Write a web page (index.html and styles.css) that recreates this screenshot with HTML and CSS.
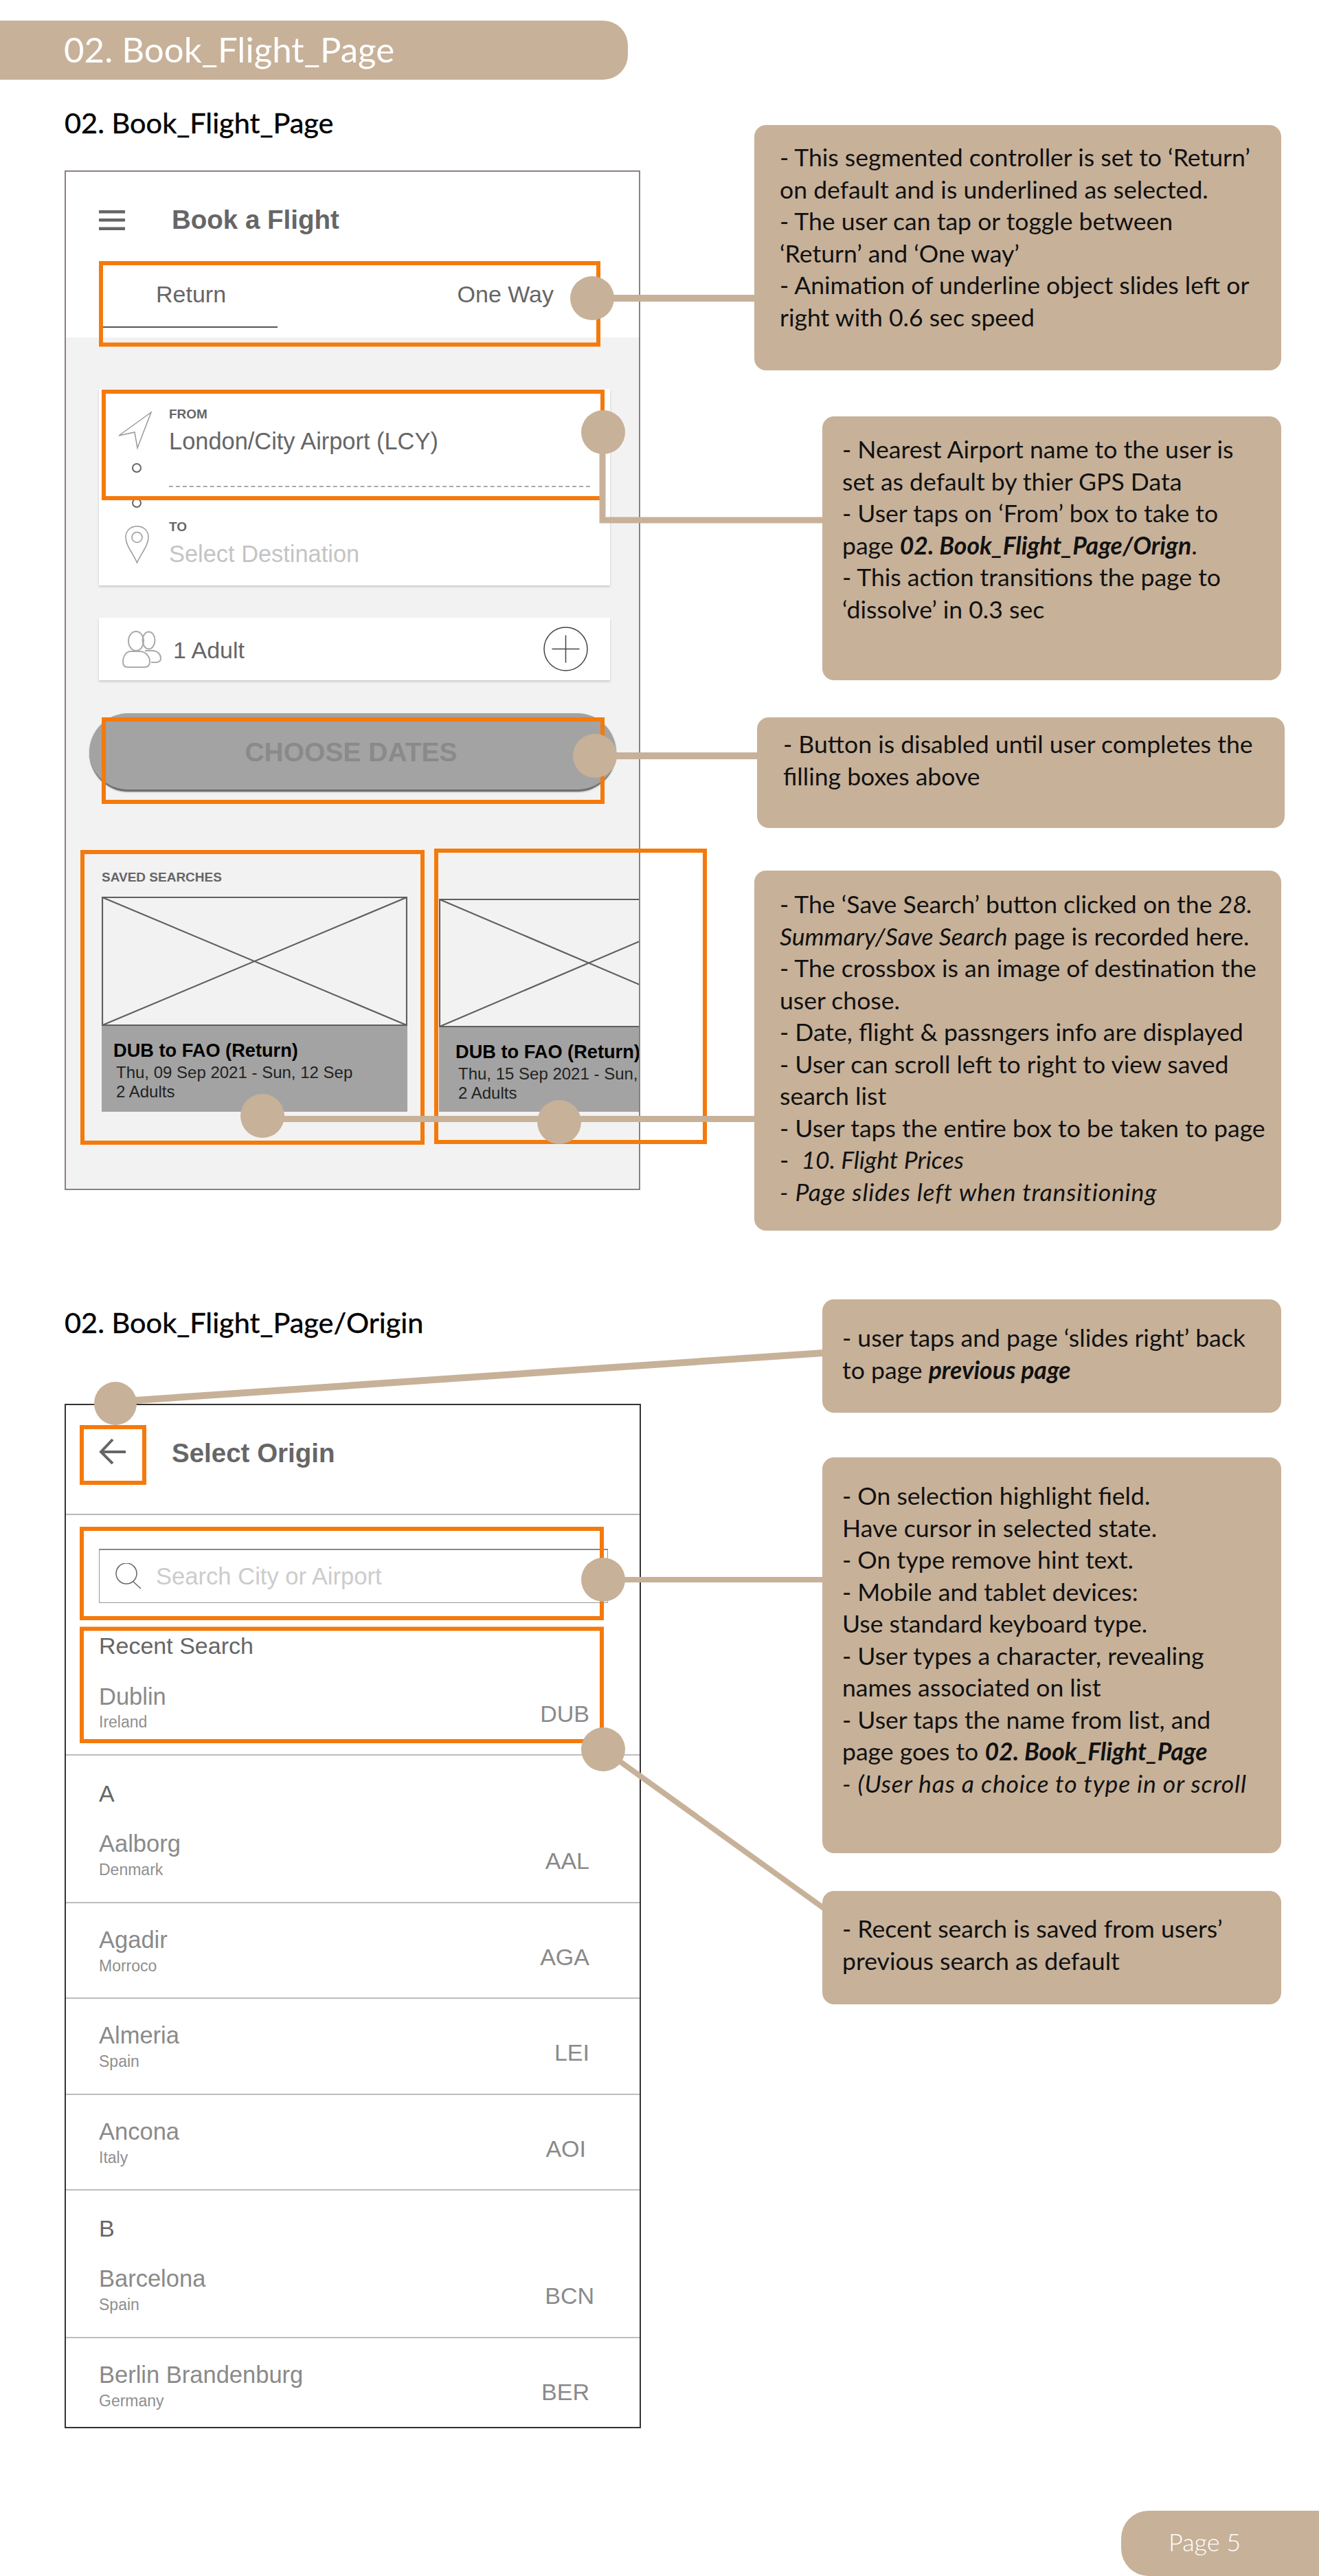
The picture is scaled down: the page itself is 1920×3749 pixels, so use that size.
FILE: index.html
```html
<!DOCTYPE html>
<html lang="en">
<head>
    <meta charset="UTF-8">
    <title>02. Book_Flight_Page</title>
    <link rel="stylesheet" href="styles.css">
</head>
<body>
<div class="page">
    <div class="banner">02. Book_Flight_Page</div>

    <section class="board board-book">
        <div class="board-left">
            <h2 class="board-title">02. Book_Flight_Page</h2>
            <div class="phone phone-book">
                <div class="topbar">
                    <svg class="burger" width="38" height="29" viewBox="0 0 38 29">
                        <rect width="38" height="4.5" y="0"/>
                        <rect width="38" height="4.5" y="12"/>
                        <rect width="38" height="4.5" y="24.5"/>
                    </svg>
                    <span class="screen-name">Book a Flight</span>
                </div>
                <div class="tabs">
                    <div class="tab tab-on">Return</div>
                    <div class="tab">One Way</div>
                </div>
                <div class="book-body">
                    <div class="card place-card">
                        <div class="place place-from">
                            <svg class="place-icon" width="102" height="143" viewBox="0 0 102 143">
                                <path class="line-light" d="M76 34 L29 68 L52 63 L56 86 Z"/>
                                <circle class="line-dark" cx="55" cy="115" r="6"/>
                            </svg>
                            <div class="place-text place-text-dashed">
                                <div class="place-label">FROM</div>
                                <div class="place-value">London/City Airport (LCY)</div>
                            </div>
                        </div>
                        <div class="place">
                            <svg class="place-icon" width="102" height="143" viewBox="0 0 102 143">
                                <circle class="line-dark" cx="55" cy="23" r="6"/>
                                <path class="line-light" d="M55.5 110 C50 97 39 85 39 73 C39 63 46 57 55.5 57 C65 57 72 63 72 73 C72 85 61 97 55.5 110 Z"/>
                                <circle class="line-light" cx="55.5" cy="73" r="7.5"/>
                            </svg>
                            <div class="place-text">
                                <div class="place-label">TO</div>
                                <div class="place-value place-empty">Select Destination</div>
                            </div>
                        </div>
                    </div>

                    <div class="card adult-card">
                        <svg width="57" height="54" viewBox="0 0 57 54">
                            <ellipse class="line-soft" cx="20" cy="15" rx="11" ry="14"/>
                            <ellipse class="line-soft" cx="38.5" cy="14" rx="9" ry="12.5"/>
                            <path class="line-soft" d="M33 29 H44 C51 29 56 34 56 40 C56 44 53 46 49 46 H42"/>
                            <path class="line-soft" d="M12 30 H25 C34 30 40 37 40 45 C40 50 37 53 32 53 H8 C3 53 1 50 1 45 C1 37 6 30 12 30 Z"/>
                        </svg>
                        <span class="adult-text">1 Adult</span>
                        <svg class="plus" width="65" height="65" viewBox="0 0 65 65">
                            <circle cx="32.5" cy="32.5" r="31.5"/>
                            <path d="M12.5 32.5 H52.5 M32.5 12.5 V52.5"/>
                        </svg>
                    </div>

                    <div class="dates-btn">CHOOSE DATES</div>

                    <div class="saved">
                        <div class="saved-title">SAVED SEARCHES</div>
                        <div class="saved-row">
                            <div class="saved-card">
                                <svg class="crossbox" viewBox="0 0 445 188" preserveAspectRatio="none">
                                    <path d="M1 1 H444 V187 H1 Z M1 1 L444 187 M444 1 L1 187"/>
                                </svg>
                                <div class="saved-info">
                                    <div class="saved-route">DUB to FAO (Return)</div>
                                    <div class="saved-meta">Thu, 09 Sep 2021 - Sun, 12 Sep<br>2 Adults</div>
                                </div>
                            </div>
                            <div class="saved-card saved-card-next">
                                <svg class="crossbox" viewBox="0 0 445 188" preserveAspectRatio="none">
                                    <path d="M1 1 H444 V187 H1 Z M1 1 L444 187 M444 1 L1 187"/>
                                </svg>
                                <div class="saved-info">
                                    <div class="saved-route">DUB to FAO (Return)</div>
                                    <div class="saved-meta">Thu, 15 Sep 2021 - Sun,<br>2 Adults</div>
                                </div>
                            </div>
                        </div>
                    </div>
                </div>
            </div>
        </div>
        <div class="board-right">
            <div class="note note-1">- This segmented controller is set to ‘Return’<br>on default and is underlined as selected.<br>- The user can tap or toggle between<br>‘Return’ and ‘One way’<br>- Animation of underline object slides left or<br>right with 0.6 sec speed</div>
            <div class="note note-2">- Nearest Airport name to the user is<br>set as default by thier GPS Data<br>- User taps on ‘From’ box to take to<br>page <b><i>02. Book_Flight_Page/Orign</i></b>.<br>- This action transitions the page to<br>‘dissolve’ in 0.3 sec</div>
            <div class="note note-3">- Button is disabled until user completes the<br>filling boxes above</div>
            <div class="note note-4">- The ‘Save Search’ button clicked on the <i>28.</i><br><i>Summary/Save Search</i> page is recorded here.<br>- The crossbox is an image of destination the<br>user chose.<br>- Date, flight &amp; passngers info are displayed<br>- User can scroll left to right to view saved<br>search list<br>- User taps the entire box to be taken to page<br>-&nbsp; <i>10. Flight Prices</i><br><i class="wide-italic">- Page slides left when transitioning</i></div>
        </div>
    </section>

    <section class="board board-origin">
        <div class="board-left">
            <h2 class="board-title board-title-origin">02. Book_Flight_Page/Origin</h2>
            <div class="phone phone-origin">
                <div class="topbar-origin">
                    <svg class="back" width="39" height="37" viewBox="0 0 39 37">
                        <path d="M39 19 H3 M20 1 L3 19 L20 36"/>
                    </svg>
                    <span class="screen-name">Select Origin</span>
                </div>
                <div class="search-box">
                    <svg width="40" height="38" viewBox="0 0 40 38">
                        <circle cx="17" cy="15" r="15"/>
                        <path d="M27 27 L38 37"/>
                    </svg>
                    <span class="search-hint">Search City or Airport</span>
                </div>
                <div class="recent-title">Recent Search</div>
                <div class="airport airport-recent">
                    <div>
                        <div class="airport-name">Dublin</div>
                        <div class="airport-country">Ireland</div>
                    </div>
                    <div class="airport-code">DUB</div>
                </div>

                <div class="letter">A</div>
                <div class="airport">
                    <div>
                        <div class="airport-name">Aalborg</div>
                        <div class="airport-country">Denmark</div>
                    </div>
                    <div class="airport-code">AAL</div>
                </div>
                <div class="airport">
                    <div>
                        <div class="airport-name">Agadir</div>
                        <div class="airport-country">Morroco</div>
                    </div>
                    <div class="airport-code">AGA</div>
                </div>
                <div class="airport">
                    <div>
                        <div class="airport-name">Almeria</div>
                        <div class="airport-country">Spain</div>
                    </div>
                    <div class="airport-code">LEI</div>
                </div>
                <div class="airport">
                    <div>
                        <div class="airport-name">Ancona</div>
                        <div class="airport-country">Italy</div>
                    </div>
                    <div class="airport-code code-left">AOI</div>
                </div>

                <div class="letter">B</div>
                <div class="airport">
                    <div>
                        <div class="airport-name">Barcelona</div>
                        <div class="airport-country">Spain</div>
                    </div>
                    <div class="airport-code code-right">BCN</div>
                </div>
                <div class="airport airport-last">
                    <div>
                        <div class="airport-name">Berlin Brandenburg</div>
                        <div class="airport-country">Germany</div>
                    </div>
                    <div class="airport-code">BER</div>
                </div>
            </div>
        </div>
        <div class="board-right">
            <div class="note note-5">- user taps and page ‘slides right’ back<br>to page <b><i>previous page</i></b></div>
            <div class="note note-6">- On selection highlight field.<br>Have cursor in selected state.<br>- On type remove hint text.<br>- Mobile and tablet devices:<br>Use standard keyboard type.<br>- User types a character, revealing<br>names associated on list<br>- User taps the name from list, and<br>page goes to <b><i>02. Book_Flight_Page</i></b><br><i class="wide-italic">- (User has a choice to type in or scroll</i></div>
            <div class="note note-7">- Recent search is saved from users’<br>previous search as default</div>
        </div>
    </section>

    <div class="page-no">Page 5</div>

    <!-- annotation layer: orange hot spots, connectors and dots over the mockups -->
    <svg class="annot" width="1920" height="3749" viewBox="0 0 1920 3749">
        <g class="hot">
            <rect x="147" y="383" width="724" height="118.5"/>
            <rect x="151" y="570" width="726" height="155"/>
            <rect x="151" y="1047" width="726" height="120"/>
            <rect x="120" y="1240" width="495" height="423"/>
            <rect x="635" y="1238" width="391" height="424"/>
            <rect x="119" y="2077" width="91" height="81"/>
            <rect x="119" y="2225" width="757" height="130"/>
            <rect x="119" y="2370.5" width="757" height="163.5"/>
        </g>
        <g class="wire">
            <path stroke-width="10" d="M862 434 H1100"/>
            <path stroke-width="9" d="M877 629 V757 H1198"/>
            <path stroke-width="10" d="M866 1100 H1104"/>
            <path stroke-width="9" d="M382 1628.5 H1099"/>
            <path stroke-width="10" d="M168 2040 L1199 1969"/>
            <path stroke-width="8" d="M878 2299 H1199"/>
            <path stroke-width="8" d="M878 2546 L1199 2777"/>
        </g>
        <g class="dots">
            <ellipse cx="862" cy="434" rx="32" ry="32"/>
            <ellipse cx="878" cy="629" rx="32" ry="32"/>
            <ellipse cx="866" cy="1100" rx="32" ry="32"/>
            <ellipse cx="382" cy="1624" rx="32" ry="32"/>
            <ellipse cx="814" cy="1633" rx="32" ry="32"/>
            <ellipse cx="168" cy="2042.5" rx="31" ry="31.5"/>
            <ellipse cx="878" cy="2299" rx="32" ry="32"/>
            <ellipse cx="878" cy="2546" rx="32" ry="32"/>
        </g>
    </svg>
</div>
</body>
</html>
```

FILE: styles.css
```css
* {
    box-sizing: border-box;
}
body {
    margin: 0;
    background: white;
    font-family: "Liberation Sans", Arial, sans-serif;
}
.page {
    position: relative;
    width: 1920px;
    height: 3749px;
    padding-top: 30px;
    overflow: hidden;
}
.banner {
    width: 914px;
    height: 86px;
    padding-left: 93px;
    background: #c7b199;
    border-radius: 0 36px 36px 0;
    color: white;
    font-family: Lato, sans-serif;
    font-weight: 400;
    font-size: 51px;
    line-height: 84px;
}

/* two column boards */
.board {
    display: flex;
}
.board-origin {
    margin-top: 100px;
}
.board-left {
    width: 1000px;
    padding-left: 94px;
    flex-shrink: 0;
}
.board-right {
    flex: 1;
    display: flex;
    flex-direction: column;
    align-items: flex-end;
}
.board-book .board-right {
    padding-top: 66px;
}
.board-title {
    margin: 32px 0 40px;
    font-family: Lato, sans-serif;
    font-weight: 400;
    font-size: 41.5px;
    line-height: 60px;
    color: black;
    -webkit-text-stroke: 0.4px black;
}
.board-title-origin {
    margin: 3px 0 89px;
}

/* tan notes */
.note {
    margin-right: 55px;
    background: #c7b199;
    border-radius: 17px;
    color: #111;
    font-family: Lato, sans-serif;
    font-weight: 400;
    font-size: 35.6px;
    line-height: 46.5px;
    white-space: nowrap;
}
.wide-italic {
    letter-spacing: 0.8px;
}
.note-1 {
    width: 767px;
    height: 357px;
    padding: 24px 0 0 37px;
}
.note-2 {
    width: 668px;
    height: 384px;
    margin-top: 67px;
    padding: 25px 0 0 29px;
}
.note-3 {
    width: 768px;
    height: 161px;
    margin-top: 54px;
    margin-right: 50px;
    padding: 16px 0 0 38px;
}
.note-4 {
    width: 767px;
    height: 524px;
    margin-top: 62px;
    padding: 26px 0 0 37px;
}
.note-5 {
    width: 668px;
    height: 165px;
    padding: 33px 0 0 29px;
}
.note-6 {
    width: 668px;
    height: 576px;
    margin-top: 65px;
    padding: 33px 0 0 29px;
}
.note-7 {
    width: 668px;
    height: 165px;
    margin-top: 55px;
    padding: 32px 0 0 29px;
}

/* phones */
.phone {
    background: white;
    overflow: hidden;
}
.phone-book {
    width: 838px;
    height: 1484px;
    border: 2px solid #8c817c;
    display: flex;
    flex-direction: column;
}
.phone-origin {
    width: 839px;
    height: 1491px;
    border: 2px solid #333;
}
.topbar {
    display: flex;
    align-items: center;
    gap: 68px;
    height: 140px;
    padding-left: 48px;
}
.burger {
    fill: #666;
}
.screen-name {
    font-weight: bold;
    font-size: 38.5px;
    color: #666;
}
.tabs {
    display: flex;
    justify-content: space-between;
    height: 101px;
    padding: 18px 124px 0 54px;
    font-size: 34px;
    line-height: 40px;
    color: #666;
}
.tab-on {
    width: 254px;
    height: 69px;
    padding-left: 77px;
    border-bottom: 2px solid #555;
}
.book-body {
    flex: 1;
    background: #f2f2f2;
    padding-top: 75px;
}
.card {
    width: 744px;
    margin-left: 48px;
    background: white;
    box-shadow: 0 2px 3px rgba(0, 0, 0, 0.18);
}
.place-card {
    height: 286px;
}
.place {
    display: flex;
    height: 143px;
}
.place-icon {
    flex-shrink: 0;
}
.line-light,
.line-dark,
.line-soft {
    fill: none;
}
.line-light {
    stroke: #999;
    stroke-width: 1.5;
}
.line-dark {
    stroke: #666;
    stroke-width: 2;
}
.line-soft {
    stroke: #aaa;
    stroke-width: 2;
}
.place-text {
    width: 613px;
    height: 143px;
    padding-top: 26px;
}
.place + .place .place-text {
    padding-top: 47px;
}
.place-text-dashed {
    border-bottom: 2px dashed #aaa;
}
.place-label {
    font-weight: bold;
    font-size: 19px;
    line-height: 22px;
    color: #666;
}
.place-value {
    margin-top: 8px;
    font-size: 34.4px;
    line-height: 40px;
    color: #666;
}
.place-empty {
    color: #c4c4c4;
}
.adult-card {
    display: flex;
    align-items: center;
    height: 91px;
    margin-top: 47px;
    padding: 0 32px 0 34px;
}
.adult-text {
    margin-left: 17px;
    padding-top: 3px;
    font-size: 34px;
    color: #666;
}
.plus {
    margin-left: auto;
    fill: none;
    stroke: #444;
    stroke-width: 1.5;
}
.dates-btn {
    width: 767px;
    height: 114px;
    margin: 48px 0 0 34px;
    padding-right: 5px;
    background: #a3a3a3;
    border-bottom: 3px solid #6f6f6f;
    border-radius: 57px;
    box-shadow: 0 1px 2px rgba(0, 0, 0, 0.3);
    text-align: center;
    font-weight: bold;
    font-size: 39px;
    line-height: 114px;
    color: #8a8a8a;
}
.saved {
    margin-top: 114px;
    padding-left: 52px;
}
.saved-title {
    font-weight: bold;
    font-size: 19px;
    line-height: 22px;
    color: #666;
}
.saved-row {
    display: flex;
    gap: 46px;
    margin-top: 17px;
}
.saved-card {
    flex-shrink: 0;
    width: 445px;
}
.saved-card-next {
    margin-top: 3px;
    width: 436px;
}
.crossbox {
    display: block;
    width: 100%;
    height: 188px;
    fill: none;
    stroke: #5f5f5f;
    stroke-width: 2.2;
}
.saved-card-next .crossbox {
    height: 187px;
}
.saved-info {
    height: 125px;
    padding: 20px 0 0 17px;
    background: #a3a3a3;
    white-space: nowrap;
}
.saved-card-next .saved-info {
    height: 123px;
    padding: 20px 0 0 24px;
}
.saved-route {
    font-weight: bold;
    font-size: 27.2px;
    line-height: 32px;
    color: black;
}
.saved-meta {
    margin-top: 2px;
    padding-left: 4px;
    font-size: 24px;
    line-height: 27.5px;
    color: #222;
}

/* origin screen */
.topbar-origin {
    display: flex;
    align-items: flex-start;
    gap: 67px;
    height: 160px;
    padding: 49px 0 0 48px;
    border-bottom: 2px solid #b8b8b8;
}
.topbar-origin .screen-name {
    line-height: 41px;
}
.back {
    fill: none;
    stroke: #666;
    stroke-width: 4;
}
.search-box {
    display: flex;
    align-items: center;
    gap: 20px;
    width: 741px;
    height: 79px;
    margin: 49px 0 0 48px;
    padding-left: 22px;
    border: 1px solid #999;
    border-top: 2px solid #888;
}
.search-box svg {
    fill: none;
    stroke: #666;
    stroke-width: 1.5;
}
.search-hint {
    font-size: 34.6px;
    color: #ccc;
}
.recent-title {
    margin: 42px 0 0 48px;
    font-size: 34px;
    line-height: 40px;
    color: #666;
}
.airport {
    display: flex;
    justify-content: space-between;
    padding: 33px 73px 32.5px 48px;
    border-bottom: 2px solid #bdbdbd;
}
.airport-recent {
    padding-top: 34px;
    padding-bottom: 33px;
}
.airport-recent .airport-country {
    margin-top: 4px;
}
.airport-last {
    border-bottom: none;
}
.airport-name {
    font-size: 34.5px;
    line-height: 40px;
    color: #8a8a8a;
}
.airport-country {
    margin-top: 5px;
    font-size: 23px;
    line-height: 27px;
    color: #8f8f8f;
}
.airport-code {
    margin-top: 25px;
    font-size: 34px;
    line-height: 40px;
    color: #8a8a8a;
}
.code-left {
    margin-right: 5px;
}
.code-right {
    margin-right: -7px;
}
.letter {
    padding: 35px 0 0 48px;
    font-size: 34px;
    line-height: 40px;
    color: #666;
}
.page-no {
    position: absolute;
    right: 0;
    bottom: 0;
    width: 288px;
    height: 95px;
    padding-left: 69px;
    background: #c7b199;
    border-radius: 40px 0 0 40px;
    color: white;
    font-family: Lato, sans-serif;
    font-weight: 300;
    font-size: 36px;
    line-height: 90px;
}

/* annotation overlay */
.annot {
    position: absolute;
    top: 0;
    left: 0;
    pointer-events: none;
}
.hot rect {
    fill: none;
    stroke: #f47a0c;
    stroke-width: 6;
}
.wire path {
    fill: none;
    stroke: #c7b199;
}
.dots ellipse {
    fill: #c7b199;
}
```
